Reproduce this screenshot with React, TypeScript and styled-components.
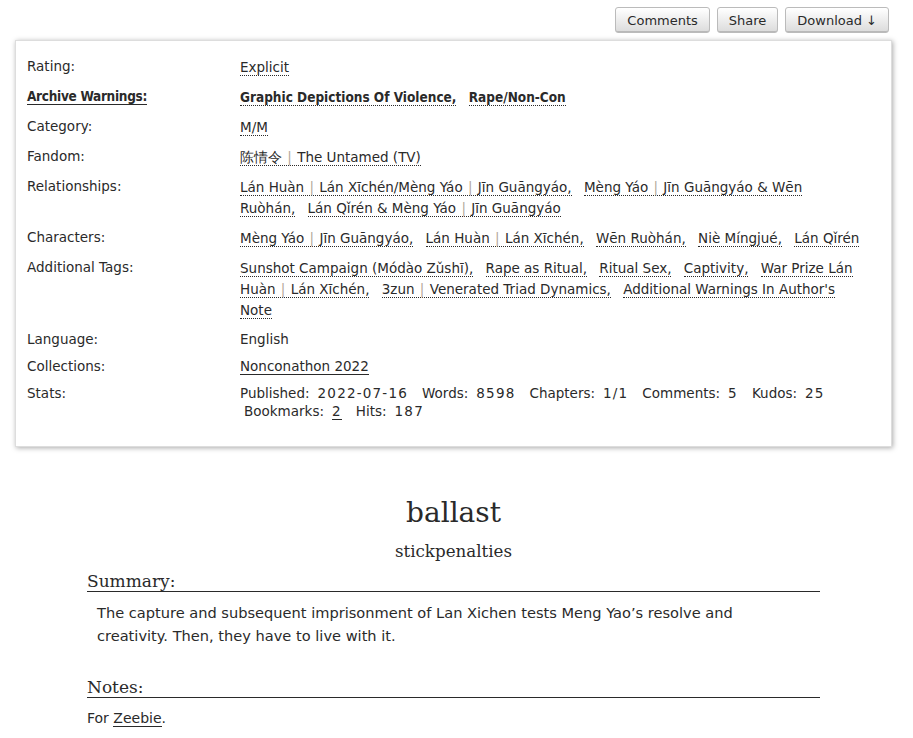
import React from 'react'
import styled, { createGlobalStyle } from 'styled-components'

const GlobalStyle = createGlobalStyle`
  html, body {
    margin: 0;
    padding: 0;
    background: #fff;
  }
  body {
    font-family: 'DejaVu Sans', Verdana, sans-serif;
    font-size: 13.5px;
    color: #2a2a2a;
  }
`

const Page = styled.div`
  padding-top: 7px;
`

const Navigation = styled.ul`
  list-style: none;
  margin: 0;
  padding: 0 24px 0 0;
  display: flex;
  justify-content: flex-end;
  gap: 7px;
`

const Button = styled.a`
  display: inline-flex;
  align-items: center;
  height: 24px;
  padding: 0 11px;
  border: 1px solid #bbb;
  border-radius: 3px;
  background: linear-gradient(#fff 2%, #ddd 95%, #bbb 100%);
  box-shadow: inset 0 -1px 0 rgba(0, 0, 0, 0.08);
  font-size: 13px;
  color: #2a2a2a;
  cursor: pointer;
`

const MetaBox = styled.div`
  margin: 7px 21px 0 15px;
  padding: 16px 12px 26px 11px;
  border: 1px solid #ddd;
  box-shadow: 1px 1px 5px #aaa;
`

const MetaList = styled.dl`
  margin: 0;
  display: grid;
  grid-template-columns: 213px 1fr;
  row-gap: 9px;
`

const boldFace = `'DejaVu Sans Condensed', 'DejaVu Sans', sans-serif`

const Term = styled.dt<{ $strong?: boolean }>`
  margin: 0;
  line-height: 18px;
  font-weight: ${p => (p.$strong ? 'bold' : 'normal')};
  font-family: ${p => (p.$strong ? boldFace : 'inherit')};
  letter-spacing: ${p => (p.$strong ? '-0.3px' : 'normal')};
  span {
    border-bottom: ${p => (p.$strong ? '1px solid #2a2a2a' : 'none')};
  }
`

const Detail = styled.dd<{ $tags?: boolean; $strong?: boolean }>`
  margin: 0;
  padding-right: 18px;
  line-height: ${p => (p.$tags ? '21px' : '18px')};
  font-weight: ${p => (p.$strong ? 'bold' : 'normal')};
  font-family: ${p => (p.$strong ? boldFace : 'inherit')};
`

const TagList = styled.ul`
  list-style: none;
  margin: 0;
  padding: 0;
  display: inline;
`

const TagItem = styled.li`
  display: inline;
  margin-right: 8px;
  &:last-child {
    margin-right: 0;
  }
`

const Tag = styled.a`
  color: #2a2a2a;
  text-decoration: none;
  border-bottom: 1px dotted #2a2a2a;
`

const Pipe = styled.span`
  color: #b3a79a;
  margin: 0 1px;
`

const SolidLink = styled.a`
  color: #2a2a2a;
  text-decoration: none;
  border-bottom: 1px solid #2a2a2a;
`

const Stat = styled.span<{ $first?: boolean }>`
  display: inline-block;
  margin-left: ${p => (p.$first ? '0' : '4px')};
  margin-right: 10px;
`

const StatValue = styled.span`
  margin-left: 8px;
  letter-spacing: 1.2px;
`

const Preface = styled.div`
  margin: 48px 93px 0 87px;
`

const Title = styled.h2`
  margin: 0;
  text-align: center;
  font-family: 'DejaVu Serif', Georgia, serif;
  font-weight: normal;
  font-size: 28px;
  line-height: 36px;
`

const Byline = styled.h3`
  margin: 8px 0 0;
  text-align: center;
  font-family: 'DejaVu Serif', Georgia, serif;
  font-weight: normal;
  font-size: 16.7px;
  line-height: 24px;
`

const Module = styled.div<{ $gap: number }>`
  margin-top: ${p => p.$gap}px;
`

const Heading = styled.h3`
  margin: 0;
  font-family: 'DejaVu Serif', Georgia, serif;
  font-weight: normal;
  font-size: 17px;
  line-height: 20px;
  border-bottom: 1px solid #2a2a2a;
`

const Blockquote = styled.blockquote<{ $indent: number; $size: number }>`
  margin: 9px 0 0 ${p => p.$indent}px;
  font-size: ${p => p.$size}px;
  line-height: 23px;
  max-width: 660px;
`

type Part = string[]

const renderTag = (parts: Part, key: number, last: boolean) => (
  <TagItem key={key}>
    <Tag>
      {parts.map((p, i) => (
        <React.Fragment key={i}>
          {i > 0 && <Pipe> | </Pipe>}
          {p}
        </React.Fragment>
      ))}
      {last ? '' : ','}
    </Tag>
    {last ? '' : ' '}
  </TagItem>
)

const Tags = ({ items }: { items: Part[] }) => (
  <TagList>{items.map((t, i) => renderTag(t, i, i === items.length - 1))}</TagList>
)

const relationships: Part[] = [
  ['Lán Huàn', 'Lán Xīchén/Mèng Yáo', 'Jīn Guāngyáo'],
  ['Mèng Yáo', 'Jīn Guāngyáo & Wēn Ruòhán'],
  ['Lán Qǐrén & Mèng Yáo', 'Jīn Guāngyáo'],
]

const characters: Part[] = [
  ['Mèng Yáo', 'Jīn Guāngyáo'],
  ['Lán Huàn', 'Lán Xīchén'],
  ['Wēn Ruòhán'],
  ['Niè Míngjué'],
  ['Lán Qǐrén'],
]

const freeforms: Part[] = [
  ['Sunshot Campaign (Módào Zǔshī)'],
  ['Rape as Ritual'],
  ['Ritual Sex'],
  ['Captivity'],
  ['War Prize Lán Huàn', 'Lán Xīchén'],
  ['3zun', 'Venerated Triad Dynamics'],
  ["Additional Warnings In Author's Note"],
]

export default function App() {
  return (
    <Page>
      <GlobalStyle />
      <Navigation>
        <li><Button>Comments</Button></li>
        <li><Button>Share</Button></li>
        <li><Button>Download ↓</Button></li>
      </Navigation>

      <MetaBox>
        <MetaList>
          <Term>Rating:</Term>
          <Detail $tags><Tags items={[['Explicit']]} /></Detail>

          <Term $strong><span>Archive Warnings:</span></Term>
          <Detail $tags $strong>
            <Tags items={[['Graphic Depictions Of Violence'], ['Rape/Non-Con']]} />
          </Detail>

          <Term>Category:</Term>
          <Detail $tags><Tags items={[['M/M']]} /></Detail>

          <Term>Fandom:</Term>
          <Detail $tags><Tags items={[['陈情令', 'The Untamed (TV)']]} /></Detail>

          <Term>Relationships:</Term>
          <Detail $tags><Tags items={relationships} /></Detail>

          <Term>Characters:</Term>
          <Detail $tags><Tags items={characters} /></Detail>

          <Term>Additional Tags:</Term>
          <Detail $tags><Tags items={freeforms} /></Detail>

          <Term>Language:</Term>
          <Detail>English</Detail>

          <Term>Collections:</Term>
          <Detail><SolidLink>Nonconathon 2022</SolidLink></Detail>

          <Term>Stats:</Term>
          <Detail>
            <Stat $first>Published:<StatValue>2022-07-16</StatValue></Stat>
            <Stat>Words:<StatValue>8598</StatValue></Stat>
            <Stat>Chapters:<StatValue>1/1</StatValue></Stat>
            <Stat>Comments:<StatValue>5</StatValue></Stat>
            <Stat>Kudos:<StatValue>25</StatValue></Stat>
            <Stat>Bookmarks:<StatValue><SolidLink>2</SolidLink></StatValue></Stat>
            <Stat>Hits:<StatValue>187</StatValue></Stat>
          </Detail>
        </MetaList>
      </MetaBox>

      <Preface>
        <Title>ballast</Title>
        <Byline>stickpenalties</Byline>

        <Module $gap={8}>
          <Heading>Summary:</Heading>
          <Blockquote $indent={10} $size={14.6}>
            The capture and subsequent imprisonment of Lan Xichen tests Meng Yao’s resolve and
            creativity. Then, they have to live with it.
          </Blockquote>
        </Module>

        <Module $gap={30}>
          <Heading>Notes:</Heading>
          <Blockquote $indent={0} $size={14}>
            For <SolidLink>Zeebie</SolidLink>.
          </Blockquote>
        </Module>
      </Preface>
    </Page>
  )
}
